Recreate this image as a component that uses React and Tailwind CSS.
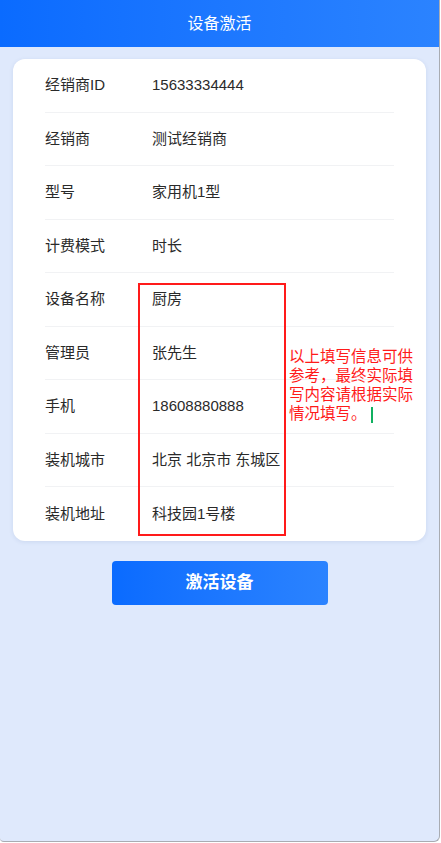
import React from "react";

const rows = [
  ["经销商ID", "15633334444"],
  ["经销商", "测试经销商"],
  ["型号", "家用机1型"],
  ["计费模式", "时长"],
  ["设备名称", "厨房"],
  ["管理员", "张先生"],
  ["手机", "18608880888"],
  ["装机城市", "北京 北京市 东城区"],
  ["装机地址", "科技园1号楼"],
];

export default function App() {
  return (
    <div
      className="relative w-[441px] h-[843px] bg-white overflow-hidden"
      style={{ fontFamily: '"Liberation Sans", "Noto Sans CJK SC", sans-serif' }}
    >
      <div className="relative w-[440px] h-[842px] bg-[#dfe9fc] border-r border-b border-[#a9acb2] rounded-br-[6px] rounded-bl-[4px] overflow-hidden flex flex-col">
        {/* header bar */}
        <div className="h-[47px] shrink-0 flex items-center justify-center bg-gradient-to-r from-[#0a6bff] to-[#2b83ff] text-white text-[16px]">
          设备激活
        </div>

        {/* info card */}
        <div className="mx-[13px] mt-[12px] bg-white rounded-[12px] shadow-[0_1px_4px_rgba(60,90,150,0.12)]">
          {rows.map(([label, value], i) => (
            <div
              key={label}
              className={
                "mx-[32px] h-[53.5px] flex items-center text-[15px] text-[#2a2a2a] " +
                (i < rows.length - 1 ? "border-b border-[#f1f2f4]" : "")
              }
            >
              <span className="w-[107px] shrink-0">{label}</span>
              <span>{value}</span>
            </div>
          ))}
        </div>

        {/* submit button */}
        <div className="flex justify-center mt-[20px]">
          <button className="w-[216px] h-[44px] rounded-[4px] bg-gradient-to-r from-[#0a6bff] to-[#2b83ff] text-white text-[17px] font-bold">
            激活设备
          </button>
        </div>

        {/* annotation overlay */}
        <div className="absolute left-[138px] top-[283px] w-[148px] h-[253px] border-2 border-[#ff1a1a]" />
        <div className="absolute left-[289px] top-[347px] w-[132px] text-[15.5px] leading-[19px] text-[#ff1a1a] break-all">
          以上填写信息可供参考，最终实际填写内容请根据实际情况填写。
          <span className="inline-block align-middle ml-[4px] w-[2px] h-[16px] bg-[#10b060]" />
        </div>
      </div>
    </div>
  );
}
